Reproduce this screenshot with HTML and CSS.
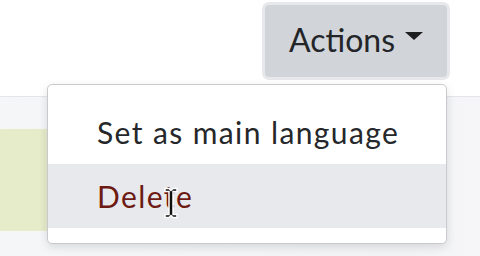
FILE: index.html
```html
<!DOCTYPE html>
<html>
<head>
<meta charset="utf-8">
<link rel="stylesheet" href="styles.css">
</head>
<body>
<div class="page">
  <header class="topbar">
    <button class="actions">Actions <span class="caret"></span></button>
  </header>
  <main class="content">
    <div class="banner"></div>
  </main>
  <div class="menu">
    <div class="item">Set as main language</div>
    <div class="item hover danger">Delete</div>
  </div>
  <svg class="cursor" width="16" height="32" viewBox="0 0 16 32">
    <path d="M2 1.5 H6 L8 3.5 L10 1.5 H14 V4.5 H10 V27.5 H14 V30.5 H10 L8 28.5 L6 30.5 H2 V27.5 H6 V4.5 H2 Z" fill="#111" stroke="#fff" stroke-width="1.5"/>
  </svg>
</div>
</body>
</html>
```

FILE: styles.css
```css
* { box-sizing: border-box; }
html, body { margin: 0; padding: 0; }
body {
  width: 480px;
  height: 256px;
  overflow: hidden;
  font-family: Lato, "Noto Sans", sans-serif;
  background: #f3f4f6;
}
.page {
  position: relative;
  width: 480px;
  height: 256px;
}
.topbar {
  height: 97px;
  background: #fff;
  border-bottom: 1px solid #e3e5e9;
  display: flex;
  justify-content: flex-end;
  align-items: flex-start;
  padding: 2px 30px 0 0;
}
.actions {
  height: 78px;
  width: 188px;
  border: 3px solid #e6e8eb;
  border-radius: 7px;
  background: #d1d5da;
  color: #232528;
  font-family: Lato, "Noto Sans", sans-serif;
  font-size: 32px;
  display: flex;
  align-items: center;
  justify-content: center;
  gap: 10px;
  padding: 0 0 4px 0;
}
.caret {
  width: 0;
  height: 0;
  border-left: 9px solid transparent;
  border-right: 9px solid transparent;
  border-top: 8px solid #1c1d1f;
  margin-top: -6px;
}
.content {
  height: 159px;
  padding-top: 32px;
  background: linear-gradient(90deg, #f5f6f8 0%, #f2f3f5 85%, #f6f6f8 100%);
}
.banner {
  height: 102px;
  width: 447px;
  background: #e6ecca;
}
.menu {
  position: absolute;
  left: 47px;
  top: 84px;
  width: 400px;
  height: 160px;
  background: #fff;
  border: 1px solid #c9cacd;
  border-radius: 5px;
  box-shadow: 0 3px 10px rgba(0,0,0,0.12);
  padding: 15px 0;
  display: flex;
  flex-direction: column;
}
.item {
  height: 64px;
  display: flex;
  align-items: center;
  padding-left: 49px;
  font-size: 30px;
  letter-spacing: 1.4px;
  color: #25272a;
}
.item.hover { background: #e8e9ec; }
.item.danger { color: #6d1a12; }
.cursor {
  position: absolute;
  left: 163px;
  top: 187px;
}
```
